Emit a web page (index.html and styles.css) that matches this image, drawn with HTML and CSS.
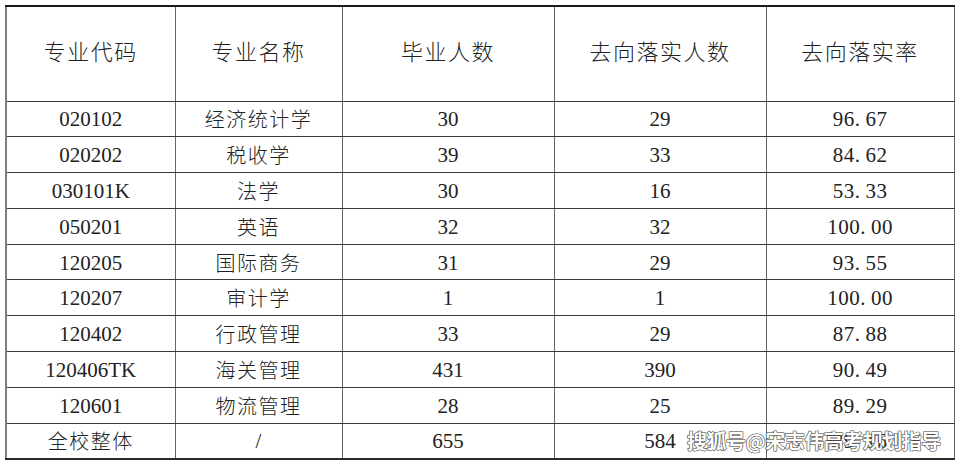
FILE: index.html
```html
<!DOCTYPE html>
<html lang="zh-CN">
<head>
<meta charset="utf-8">
<title>专业去向落实率</title>
<link rel="stylesheet" href="styles.css">
</head>
<body>
<div class="page">
  <table class="grid">
    <colgroup>
      <col class="c1"><col class="c2"><col class="c3"><col class="c4"><col class="c5">
    </colgroup>
    <thead>
      <tr class="head">
        <th>专业代码</th><th>专业名称</th><th>毕业人数</th><th>去向落实人数</th><th>去向落实率</th>
      </tr>
    </thead>
    <tbody>
      <tr><td>020102</td><td class="cn">经济统计学</td><td>30</td><td>29</td><td class="rate">96<span class="dot">.</span>67</td></tr>
      <tr><td>020202</td><td class="cn">税收学</td><td>39</td><td>33</td><td class="rate">84<span class="dot">.</span>62</td></tr>
      <tr><td>030101K</td><td class="cn">法学</td><td>30</td><td>16</td><td class="rate">53<span class="dot">.</span>33</td></tr>
      <tr><td>050201</td><td class="cn">英语</td><td>32</td><td>32</td><td class="rate">100<span class="dot">.</span>00</td></tr>
      <tr><td>120205</td><td class="cn">国际商务</td><td>31</td><td>29</td><td class="rate">93<span class="dot">.</span>55</td></tr>
      <tr><td>120207</td><td class="cn">审计学</td><td>1</td><td>1</td><td class="rate">100<span class="dot">.</span>00</td></tr>
      <tr><td>120402</td><td class="cn">行政管理</td><td>33</td><td>29</td><td class="rate">87<span class="dot">.</span>88</td></tr>
      <tr><td>120406TK</td><td class="cn">海关管理</td><td>431</td><td>390</td><td class="rate">90<span class="dot">.</span>49</td></tr>
      <tr><td>120601</td><td class="cn">物流管理</td><td>28</td><td>25</td><td class="rate">89<span class="dot">.</span>29</td></tr>
      <tr><td class="cn">全校整体</td><td>/</td><td>655</td><td>584</td><td class="rate">89<span class="dot">.</span>16</td></tr>
    </tbody>
  </table>
  <div class="watermark">搜狐号@宋志伟高考规划指导</div>
</div>
</body>
</html>
```

FILE: styles.css
```css
html, body {
  margin: 0;
  padding: 0;
  background: #ffffff;
}

.page {
  position: relative;
  width: 960px;
  height: 466px;
  padding: 5px 0 0 5px;
  box-sizing: border-box;
  overflow: hidden;
}

.grid {
  border-collapse: collapse;
  table-layout: fixed;
  width: 948px;
  font-family: "Liberation Serif", "Noto Sans CJK SC", serif;
  color: #222;
}

.c1 { width: 169px; }
.c2 { width: 167px; }
.c3 { width: 212px; }
.c4 { width: 212px; }
.c5 { width: 188px; }

.grid th,
.grid td {
  border: 1px solid #3a3a3a;
  border-left-color: #666;
  border-right-color: #666;
  text-align: center;
  vertical-align: middle;
  padding: 0;
  line-height: 22px;
  overflow: hidden;
  white-space: nowrap;
}

.grid th:first-child,
.grid td:first-child {
  border-left: 2px solid #808080;
}

.grid thead th {
  border-top: 2px solid #1a1a1a;
}

.grid tbody tr:last-child td {
  border-bottom: 2px solid #2a2a2a;
}

.head {
  height: 95px;
}

.head th {
  font-weight: 300;
  font-size: 22px;
  letter-spacing: 1.5px;
  font-family: "Noto Sans CJK SC", sans-serif;
  padding-bottom: 8px;
}

.grid tbody tr {
  height: 35.8px;
}

.grid tbody td {
  font-size: 21px;
  padding-top: 1px;
}

.grid td.cn {
  font-family: "Noto Sans CJK SC", sans-serif;
  font-weight: 300;
  font-size: 20px;
  letter-spacing: 1.5px;
}

.rate {
  letter-spacing: 0.5px;
}

.dot {
  margin-right: 5px;
}

.watermark {
  position: absolute;
  left: 687px;
  top: 428px;
  font-family: "Noto Sans CJK SC", sans-serif;
  font-weight: 700;
  font-size: 20px;
  line-height: 26px;
  letter-spacing: -0.5px;
  color: #ffffff;
  -webkit-text-stroke: 1px #4a4a4a;
  paint-order: stroke fill;
  text-shadow: 0 0 1px #333;
}
```
